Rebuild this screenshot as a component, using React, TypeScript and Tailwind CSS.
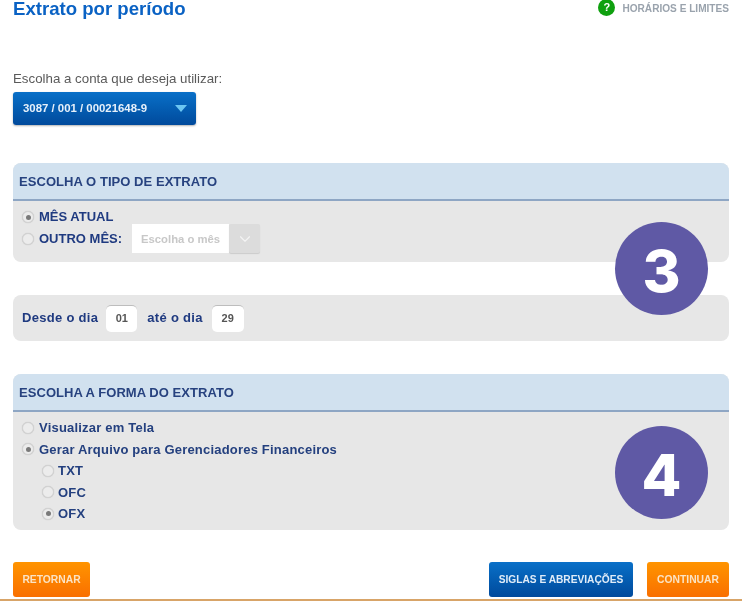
import { ChevronDown } from 'lucide-react'

function Radio({ checked = false }: { checked?: boolean }) {
  return (
    <span className="flex h-[12px] w-[12px] shrink-0 items-center justify-center rounded-full border border-[#d2d2d2] bg-[#ececec] shadow-[0_0_1px_rgba(0,0,0,0.2)]">
      {checked && <span className="h-[5px] w-[5px] rounded-full bg-[#7a7a7a]" />}
    </span>
  )
}

function PanelHeader({ title }: { title: string }) {
  return (
    <div className="flex h-[38px] items-center rounded-t-[8px] border-b-2 border-[#8ea6c4] bg-[#d1e1ef] px-[6px] pt-[1px] text-[13px] tracking-[0.05px] font-bold text-[#27427f]">
      {title}
    </div>
  )
}

function Step({ n, className }: { n: number; className: string }) {
  return (
    <div className={`absolute right-[34px] flex h-[93px] w-[93px] items-center justify-center rounded-full bg-[#5f59a5] pt-[4px] font-['Inter',sans-serif] text-[58px] leading-none font-extrabold text-white ${className}`}>
      {n}
    </div>
  )
}

export default function App() {
  return (
    <div className="relative flex h-[601px] w-[742px] flex-col overflow-hidden bg-white px-[13px] font-['Liberation_Sans',sans-serif] blur-[0.5px]">
      <div className="flex h-[22px] items-start justify-between">
        <h1 className="text-[18.6px] leading-[18px] font-bold text-[#0a62c4]">Extrato por período</h1>
        <div className="flex items-center gap-[7px]">
          <span className="flex h-[17px] w-[17px] -translate-y-[1px] items-center justify-center rounded-full bg-[#0fa00f] text-[11px] font-bold text-white">?</span>
          <span className="text-[10.1px] leading-[14px] font-bold text-[#9aa3ad]">HORÁRIOS E LIMITES</span>
        </div>
      </div>

      <p className="mt-[49px] text-[13.3px] leading-[16px] text-[#5a5a5a]">Escolha a conta que deseja utilizar:</p>
      <div className="mt-[5px] flex h-[33px] w-[183px] items-center justify-between rounded-[3px] bg-gradient-to-b from-[#0a70c8] to-[#014a9c] pr-[9px] pl-[10px] text-[11.4px] font-bold text-[#e6f0fa] shadow-[0_1px_2px_rgba(0,0,0,0.3)]">
        <span>3087 / 001 / 00021648-9</span>
        <span className="h-0 w-0 border-x-[6px] border-t-[7px] border-x-transparent border-t-[#6cc6f2]" />
      </div>

      <section className="mt-[38px] h-[99px] rounded-[8px] bg-[#e7e7e7]">
        <PanelHeader title="ESCOLHA O TIPO DE EXTRATO" />
        <div className="flex flex-col pt-[8px] pl-[9px] text-[13px] leading-[16px] font-bold text-[#1f3a80]">
          <label className="flex items-center gap-[5px]">
            <Radio checked />
            MÊS ATUAL
          </label>
          <label className="-mt-[1px] flex items-center gap-[5px]">
            <Radio />
            OUTRO MÊS:
            <span className="ml-[5px] flex">
              <span className="flex h-[29px] w-[97px] items-center justify-center bg-white text-[11.3px] text-[#c8c8c8]">Escolha o mês</span>
              <span className="flex h-[29px] w-[31px] items-center justify-center rounded-[2px] bg-[#dcdcdc] text-[#f4f4f4] shadow-[0_1px_1px_rgba(0,0,0,0.12)]">
                <ChevronDown size={18} strokeWidth={1.5} />
              </span>
            </span>
          </label>
        </div>
      </section>

      <section className="mt-[33px] flex h-[46px] items-center rounded-[8px] bg-[#e7e7e7] pl-[9px] text-[13px] tracking-[0.3px] font-bold text-[#1f3a80]">
        Desde o dia
        <span className="mr-[10px] ml-[8px] flex h-[27px] w-[31px] items-center justify-center rounded-[5px] border-t border-[#bdbdbd] bg-white text-[11px] tracking-normal text-[#555555]">01</span>
        até o dia
        <span className="ml-[9px] flex h-[27px] w-[32px] items-center justify-center rounded-[5px] border-t border-[#bdbdbd] bg-white text-[11px] tracking-normal text-[#555555]">29</span>
      </section>

      <section className="mt-[33px] h-[156px] rounded-[8px] bg-[#e7e7e7]">
        <PanelHeader title="ESCOLHA A FORMA DO EXTRATO" />
        <div className="flex flex-col gap-[6px] pt-[8px] pl-[9px] text-[13px] leading-[15.5px] tracking-[0.2px] font-bold text-[#24407f]">
          <label className="flex items-center gap-[5px]">
            <Radio />
            Visualizar em Tela
          </label>
          <label className="flex items-center gap-[5px]">
            <Radio checked />
            Gerar Arquivo para Gerenciadores Financeiros
          </label>
          {['TXT', 'OFC', 'OFX'].map((f) => (
            <label key={f} className="flex items-center gap-[4px] pl-[20px]">
              <Radio checked={f === 'OFX'} />
              {f}
            </label>
          ))}
        </div>
      </section>

      <div className="mt-[32px] flex h-[35px] items-center text-[10.3px] font-bold">
        <button className="h-[35px] w-[77px] rounded-[3px] bg-gradient-to-b from-[#ff9400] to-[#f96f00] text-[#fbe3c4]">RETORNAR</button>
        <button className="ml-auto h-[35px] w-[144px] rounded-[3px] bg-gradient-to-b from-[#0a70c8] to-[#014a9c] text-[10.2px] text-[#e0ecf8]">SIGLAS E ABREVIAÇÕES</button>
        <button className="ml-[14px] h-[35px] w-[82px] rounded-[3px] bg-gradient-to-b from-[#ff9400] to-[#f96f00] text-[#fbe3c4]">CONTINUAR</button>
      </div>
      <div className="-mx-[13px] mt-[2px] h-[2px] bg-[#d8a468]" />

      <Step n={3} className="top-[222px]" />
      <Step n={4} className="top-[426px]" />
    </div>
  )
}
